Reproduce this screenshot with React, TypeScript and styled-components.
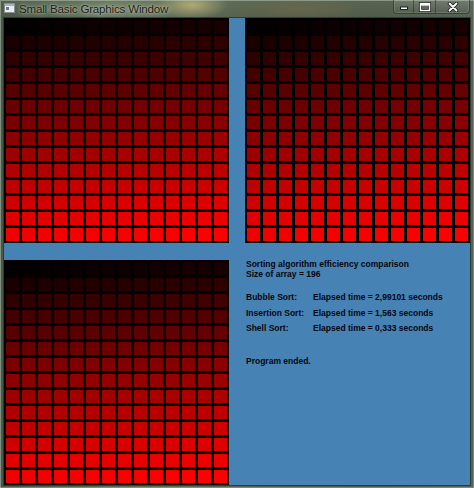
import React from "react";
import styled, { createGlobalStyle } from "styled-components";

const Global = createGlobalStyle`
  html, body { margin: 0; padding: 0; background: #4a5646; }
  * { box-sizing: border-box; }
`;

const Frame = styled.div`
  width: 474px;
  height: 488px;
  display: flex;
  flex-direction: column;
  padding: 0 4px 3px 4px;
  background:
    radial-gradient(ellipse 36px 14px at 192px 5px, rgba(195, 185, 125, 0.8), transparent),
    radial-gradient(ellipse 70px 12px at 300px 9px, rgba(125, 110, 75, 0.45), transparent),
    radial-gradient(ellipse 60px 14px at 110px 10px, rgba(130, 150, 115, 0.5), transparent),
    linear-gradient(180deg, rgba(255, 255, 255, 0.06) 0px, rgba(0, 0, 0, 0) 18px),
    linear-gradient(90deg, #4a5745 0%, #5b6952 22%, #5f6d55 36%, #525e49 55%, #4f5a48 80%, #566255 100%);
  box-shadow: inset 1px 1px 0 rgba(200, 215, 200, 0.45), inset -1px -1px 0 rgba(200, 215, 200, 0.35);
`;

const TitleBar = styled.div`
  height: 18px;
  display: flex;
  align-items: flex-start;
  position: relative;
`;

const AppIcon = styled.svg`
  width: 11px;
  height: 10px;
  margin: 3px 0 0 0;
  flex: none;
`;

const Title = styled.span`
  margin: 2px 0 0 4px;
  font-family: "Liberation Sans", Arial, sans-serif;
  font-size: 11.6px;
  letter-spacing: -0.2px;
  line-height: 13px;
  color: #1a1e18;
  text-shadow: 0 0 6px rgba(235, 240, 225, 0.8), 0 0 2px rgba(235, 240, 225, 0.55);
`;

const Buttons = styled.div`
  position: absolute;
  top: 0;
  right: 0;
  height: 14px;
  display: flex;
  border: 1px solid rgba(30, 40, 30, 0.55);
  border-top: none;
  border-radius: 0 0 4px 4px;
  box-shadow: inset 0 0 0 1px rgba(200, 210, 195, 0.25);
  overflow: hidden;
`;

const CapButton = styled.div<{ $w: number; $last?: boolean }>`
  width: ${(p) => p.$w}px;
  height: 100%;
  display: flex;
  align-items: center;
  justify-content: center;
  background: linear-gradient(180deg, rgba(150, 160, 145, 0.35), rgba(80, 90, 75, 0.25));
  border-right: ${(p) => (p.$last ? "none" : "1px solid rgba(30, 40, 30, 0.5)")};
`;

const Client = styled.div`
  width: 466px;
  height: 467px;
  background: #4682b4;
  display: grid;
  grid-template-columns: 225px 225px;
  grid-template-rows: 225px 225px;
  column-gap: 16px;
  row-gap: 17px;
  box-shadow: 0 0 0 1px rgba(35, 45, 35, 0.7);
`;

const Board = styled.div`
  width: 225px;
  height: 225px;
  display: grid;
  grid-template-columns: repeat(14, 13px);
  grid-template-rows: repeat(14, 13px);
  gap: 3px;
  padding: 2px;
  background: #000;
`;

const Cell = styled.div`
  width: 13px;
  height: 13px;
`;

const Report = styled.div`
  padding: 0 0 0 1px;
  font-family: "Liberation Sans", Tahoma, Arial, sans-serif;
  font-weight: bold;
  font-size: 8.5px;
  color: #06060f;
  display: flex;
  flex-direction: column;
`;

const Heading = styled.div`
  line-height: 9.5px;
  white-space: nowrap;
`;

const Results = styled.div`
  margin-top: 11px;
  display: flex;
  flex-direction: column;
`;

const ResultRow = styled.div`
  display: grid;
  grid-template-columns: 67px auto;
  line-height: 15.7px;
  white-space: nowrap;
`;

const Footer = styled.div`
  margin-top: 16px;
  line-height: 16px;
`;

const cells = Array.from({ length: 196 }, (_, i) => i);

function SortedBoard() {
  return (
    <Board>
      {cells.map((i) => {
        const red = Math.round(255 * Math.pow((i + 1) / 196, 0.88));
        return <Cell key={i} style={{ background: `rgb(${red},0,0)` }} />;
      })}
    </Board>
  );
}

const results = [
  ["Bubble Sort:", "Elapsed time = 2,99101 seconds"],
  ["Insertion Sort:", "Elapsed time = 1,563 seconds"],
  ["Shell Sort:", "Elapsed time = 0,333 seconds"],
];

export default function App() {
  return (
    <>
      <Global />
      <Frame>
        <TitleBar>
          <AppIcon viewBox="0 0 11 10">
            <rect x="0.5" y="0.5" width="10" height="9" fill="#e8ecef" stroke="#8a9090" />
            <rect x="1" y="1" width="9" height="2" fill="#9fb4c8" />
            <rect x="2" y="4" width="3" height="3" fill="#6a7a88" />
          </AppIcon>
          <Title>Small Basic Graphics Window</Title>
          <Buttons>
            <CapButton $w={20}>
              <svg width="10" height="8" viewBox="0 0 10 8">
                <rect x="1.5" y="4" width="7" height="2.5" fill="#fff" stroke="#1c221c" strokeWidth="1" />
              </svg>
            </CapButton>
            <CapButton $w={22}>
              <svg width="12" height="10" viewBox="0 0 12 10">
                <rect x="1.5" y="1.5" width="9" height="7" fill="none" stroke="#1c221c" strokeWidth="3" />
                <rect x="1.5" y="1.5" width="9" height="7" fill="none" stroke="#fff" strokeWidth="1.4" />
                <rect x="2" y="2" width="8" height="1.6" fill="#fff" />
              </svg>
            </CapButton>
            <CapButton $w={33} $last>
              <svg width="12" height="10" viewBox="0 0 12 10">
                <path d="M2.5 1.5 L9.5 8.5 M9.5 1.5 L2.5 8.5" stroke="#1c221c" strokeWidth="3.6" strokeLinecap="round" />
                <path d="M2.5 1.5 L9.5 8.5 M9.5 1.5 L2.5 8.5" stroke="#fff" strokeWidth="1.8" strokeLinecap="round" />
              </svg>
            </CapButton>
          </Buttons>
        </TitleBar>
        <Client>
          <SortedBoard />
          <SortedBoard />
          <SortedBoard />
          <Report>
            <Heading>Sorting algorithm efficiency comparison</Heading>
            <Heading>Size of array = 196</Heading>
            <Results>
              {results.map(([name, time]) => (
                <ResultRow key={name}>
                  <span>{name}</span>
                  <span>{time}</span>
                </ResultRow>
              ))}
            </Results>
            <Footer>Program ended.</Footer>
          </Report>
        </Client>
      </Frame>
    </>
  );
}
